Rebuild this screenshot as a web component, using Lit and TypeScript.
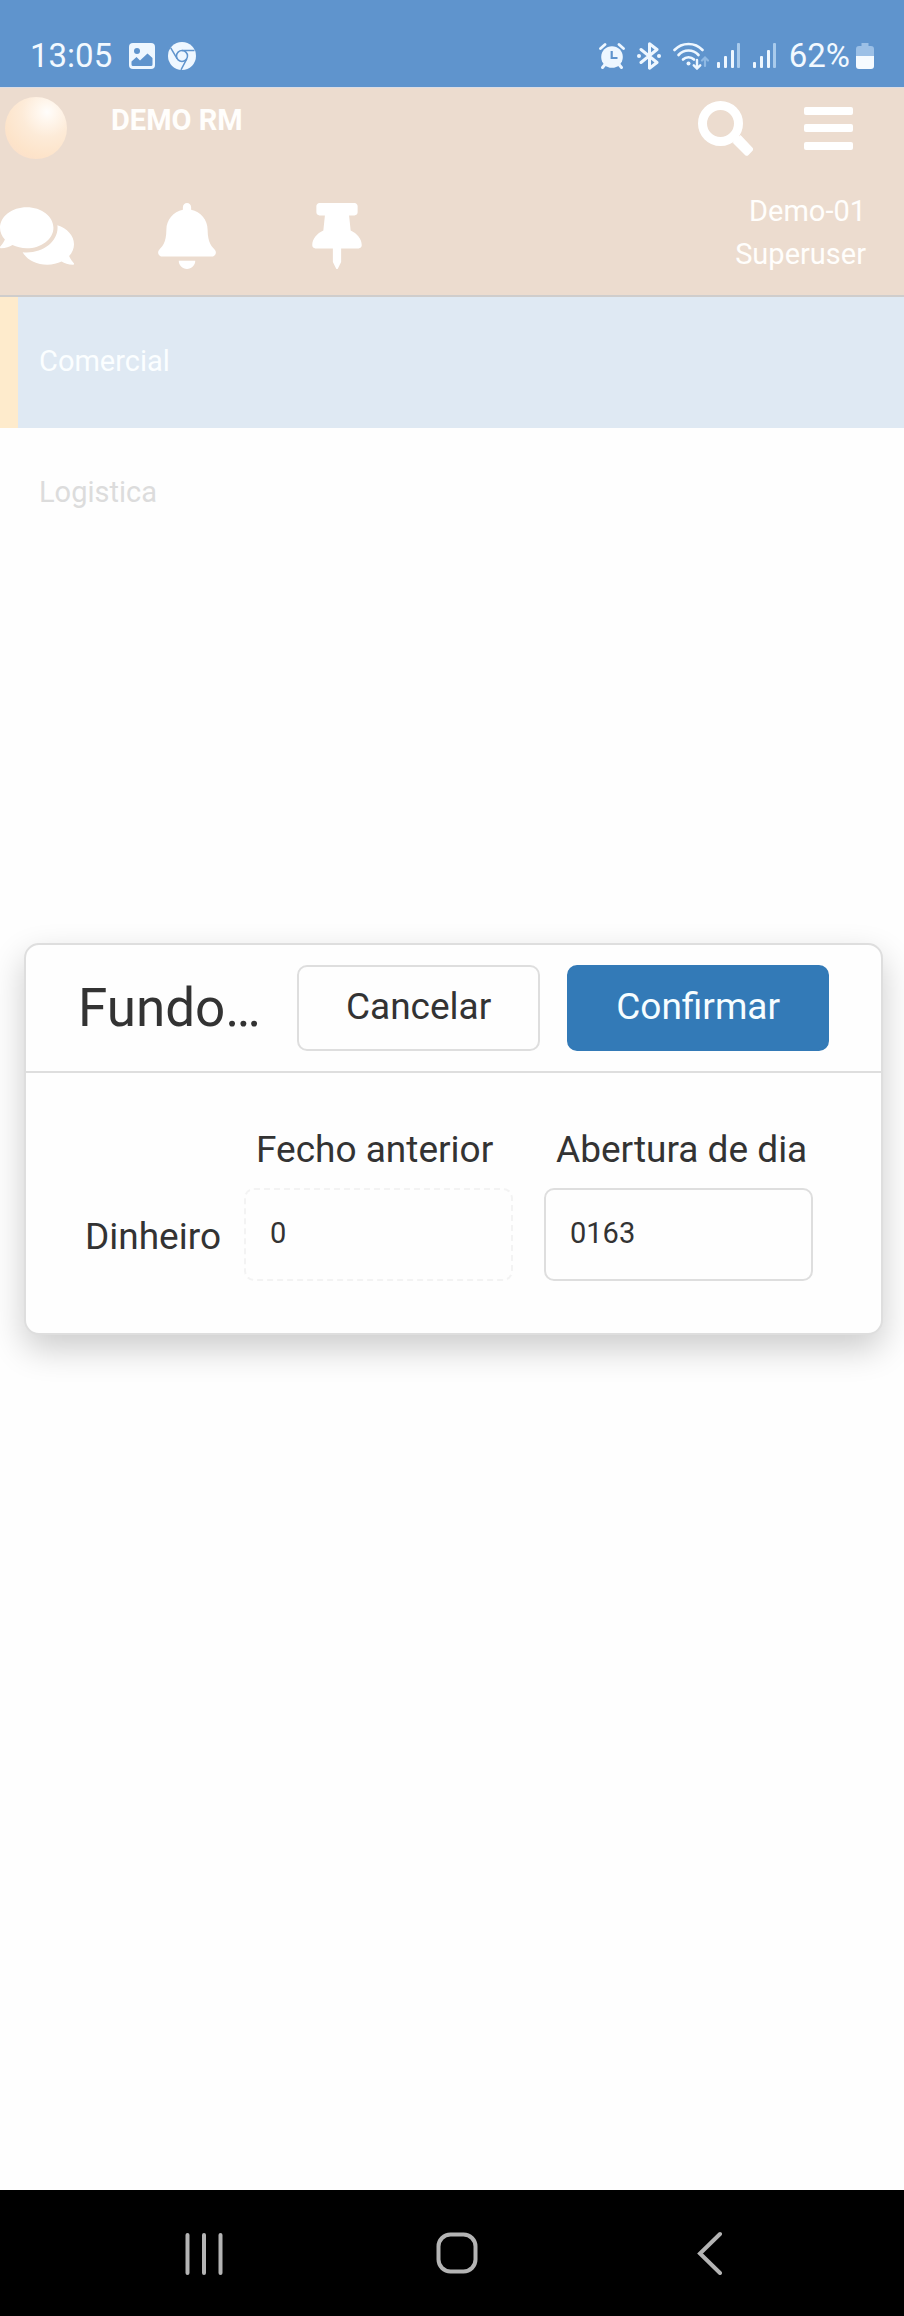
import { LitElement, html, css, svg } from "lit";
import { customElement, property } from "lit/decorators.js";

const signalIcon = html`
  <svg width="24" height="28" viewBox="0 0 24 28" aria-hidden="true">
    <g fill="#eef7ff">
      <rect x="0" y="20" width="3" height="6" rx="1" />
      <rect x="7" y="14" width="3" height="12" rx="1" />
      <rect x="14" y="8" width="3" height="18" rx="1" />
    </g>
    <rect x="20" y="1" width="3" height="25" rx="1" fill="#a9cbec" />
  </svg>
`;

@customElement("status-bar")
export class StatusBar extends LitElement {
  @property() time = "13:05";
  @property() battery = "62%";

  static styles = css`
    :host {
      display: flex;
      justify-content: space-between;
      align-items: center;
      box-sizing: border-box;
      height: 88px;
      padding: 24px 30px 0;
      border-bottom: 1px solid #dcdde4;
      background: #5f94cd;
      color: #f2f9ff;
      font-size: 33px;
      line-height: 40px;
    }
    svg {
      display: block;
      flex: none;
    }
    .group {
      display: flex;
      align-items: center;
      gap: 12px;
    }
    .time {
      margin-right: 4px;
    }
    .wifi {
      margin-right: -4px;
    }
    .level {
      display: flex;
      align-items: center;
      gap: 6px;
    }
  `;

  render() {
    return html`
      <div class="group">
        <span class="time">${this.time}</span>
        <svg width="28" height="28" viewBox="0 0 28 28" aria-hidden="true">
          <rect x="1" y="1" width="26" height="26" rx="4" fill="#eef7ff" />
          <circle cx="9" cy="9" r="3" fill="#5f94cd" />
          <path d="M3.500 22.500V19.500L8.500 15l3.500 3.500 7.500-7 5 4.500v6.500a1.500 1.500 0 0 1-1.500 1.500H5a1.500 1.500 0 0 1-1.500-1.500z" fill="#5f94cd" />
        </svg>
        <svg width="28" height="28" viewBox="0 0 28 28" aria-hidden="true">
          <circle cx="14" cy="14" r="14" fill="#eef7ff" />
          <g fill="none" stroke="#5f94cd" stroke-width="1.500">
            <circle cx="14" cy="14" r="5.500" />
            <path d="M14 8.500H26.500M9.200 16.800L2.700 5.800M18.800 16.800L13 27.800" />
          </g>
        </svg>
      </div>
      <div class="group">
        <svg width="26" height="28" viewBox="0 0 26 28" aria-hidden="true">
          <circle cx="13" cy="15" r="10.800" fill="#eef7ff" />
          <path d="M1.500 6.500L6 2.500M24.500 6.500L20 2.500" stroke="#eef7ff" stroke-width="2.800" stroke-linecap="round" />
          <path d="M6 22.500L3.500 25.500M20 22.500L22.500 25.500" stroke="#eef7ff" stroke-width="3" stroke-linecap="round" />
          <path d="M12.700 9v7h5.800" fill="none" stroke="#5f94cd" stroke-width="2.200" />
        </svg>
        <svg width="24" height="28" viewBox="0 0 24 28" aria-hidden="true">
          <path d="M4 7.500L20 20.500 12.500 26.200V1.800L20 7.500 4 20.500" fill="none" stroke="#eef7ff" stroke-width="3" stroke-linejoin="round" stroke-linecap="round" />
          <circle cx="2" cy="14" r="2" fill="#eef7ff" />
          <circle cx="22" cy="14" r="2" fill="#eef7ff" />
        </svg>
        <svg class="wifi" width="36" height="28" viewBox="0 0 36 28" aria-hidden="true">
          <g fill="none" stroke="#eef7ff" stroke-width="2.600" stroke-linecap="round">
            <path d="M1.500 8C9 0 22 0 29.500 8" />
            <path d="M5.500 13C11 7 20 7 25.500 13" />
            <path d="M10 17.500C13 14.500 18 14.500 21 17.500" />
          </g>
          <circle cx="15.500" cy="21.500" r="2" fill="#eef7ff" />
          <path d="M24 18v8M20.800 23.300L24 26.500 27.200 23.300" fill="none" stroke="#eef7ff" stroke-width="2.400" stroke-linecap="round" />
          <path d="M32 24v-8M29 18.500L32 15.500 35 18.500" fill="none" stroke="#8fb9e4" stroke-width="2.200" stroke-linecap="round" />
        </svg>
        ${signalIcon} ${signalIcon}
        <div class="level">
          <span>${this.battery}</span>
          <svg width="18" height="28" viewBox="0 0 18 28" aria-hidden="true">
            <path d="M5.500 1h7v3H15a3 3 0 0 1 3 3v8H0V7a3 3 0 0 1 3-3h2.500z" fill="#9cc0e6" />
            <path d="M0 14h18v10a3 3 0 0 1-3 3H3a3 3 0 0 1-3-3z" fill="#f6fbff" />
          </svg>
        </div>
      </div>
    `;
  }
}

const glyphs = {
  comments: {
    box: "0 0 576 512",
    width: 74,
    d: "M416 192c0-88.4-93.1-160-208-160S0 103.6 0 192c0 34.3 14.1 65.9 38 92-13.4 30.2-35.5 54.2-35.8 54.5-2.2 2.3-2.8 5.7-1.5 8.7S4.8 352 8 352c36.6 0 66.9-12.3 88.7-25 32.2 15.7 70.3 25 111.3 25 114.900 0 208-71.600 208-160zm122 220c23.900-26 38-57.700 38-92 0-66.900-53.500-124.200-129.300-148.100.9 6.600 1.300 13.300 1.300 20.100 0 105.900-107.700 192-240 192-10.800 0-21.300-.8-31.700-1.900C207.800 439.600 281.800 480 368 480c41 0 79.100-9.200 111.300-25 21.800 12.700 52.100 25 88.700 25 3.200 0 6.100-1.900 7.300-4.800 1.300-2.900.7-6.300-1.500-8.700-.3-.2-22.400-24.200-35.800-54.500z",
  },
  bell: {
    box: "0 0 448 512",
    width: 58,
    d: "M224 512c35.320 0 63.970-28.650 63.970-64H160.030c0 35.350 28.650 64 63.970 64zm215.390-149.710c-19.320-20.760-55.470-51.990-55.470-154.290 0-77.700-54.480-139.900-127.940-155.160V32c0-17.670-14.320-32-31.980-32s-31.980 14.330-31.980 32v20.840C118.560 68.100 64.080 130.300 64.080 208c0 102.300-36.150 133.530-55.470 154.290-6 6.450-8.660 14.160-8.610 21.710.11 16.400 12.980 32 32.100 32h383.800c19.120 0 32-15.600 32.100-32 .05-7.550-2.610-15.270-8.610-21.710z",
  },
  pin: {
    box: "0 0 384 512",
    width: 50,
    d: "M298.028 214.267L285.793 96H328c13.255 0 24-10.745 24-24V24c0-13.255-10.745-24-24-24H56C42.745 0 32 10.745 32 24v48c0 13.255 10.745 24 24 24h42.207L85.972 214.267C37.465 236.820 0 277.261 0 328c0 13.255 10.745 24 24 24h136v104.007c0 1.242.289 2.467.845 3.578l24 48c2.941 5.882 11.364 5.893 14.311 0l24-48a8.008 8.008 0 0 0 .845-3.578V352h136c13.255 0 24-10.745 24-24-.001-51.183-37.983-91.420-85.973-113.733z",
  },
};

@customElement("app-header")
export class AppHeader extends LitElement {
  static styles = css`
    :host {
      display: block;
      padding: 9px 38px 19px 0;
      border-bottom: 2px solid #cfcdcc;
      background: #ecdccf;
      color: #fffefc;
      font-size: 29px;
    }
    svg {
      display: block;
    }
    button {
      display: flex;
      align-items: center;
      justify-content: center;
      padding: 0;
      border: 0;
      background: none;
      color: #ffffff;
    }
    .top,
    .bottom {
      display: flex;
      justify-content: space-between;
      align-items: flex-start;
    }
    .brand {
      display: flex;
      gap: 44px;
      padding-left: 5px;
    }
    .orb {
      width: 62px;
      height: 62px;
      border-radius: 50%;
      background: radial-gradient(circle at 68% 24%, #fffdfb 0, #fff7ee 14%, #fdebd8 40%, #fde4ca 70%, #fadccb 100%);
    }
    .name {
      margin: 0;
      padding-top: 3px;
      font-size: 29px;
      font-weight: 700;
      line-height: 40px;
    }
    .tools {
      display: flex;
      gap: 51px;
      padding: 4px 13px 0 0;
    }
    .bottom {
      padding-top: 31px;
    }
    .shortcuts {
      display: flex;
      gap: 76px;
      padding-top: 13px;
    }
    .shortcuts button {
      width: 74px;
      height: 66px;
    }
    .user {
      line-height: 43px;
      text-align: right;
    }
  `;

  private shortcut(label: string, g: { box: string; width: number; d: string }) {
    return html`
      <button type="button" aria-label=${label}>
        <svg width=${g.width} height="66" viewBox=${g.box}>
          ${svg`<path fill="currentColor" d=${g.d} />`}
        </svg>
      </button>
    `;
  }

  render() {
    return html`
      <div class="top">
        <div class="brand">
          <div class="orb"></div>
          <h1 class="name">DEMO RM</h1>
        </div>
        <div class="tools">
          <button type="button" aria-label="Pesquisar">
            <svg width="55" height="55" viewBox="0 0 55 55">
              <circle cx="22.500" cy="22.500" r="18" fill="none" stroke="currentColor" stroke-width="9" />
              <path d="M34 42.500L42.500 34 54.300 46.500a2.500 2.500 0 0 1 0 3.500L50.500 54a2.500 2.500 0 0 1-3.500 0L35 42z" fill="currentColor" />
              <path d="M31 35.500L35.500 31 42 36 37 42z" fill="currentColor" />
            </svg>
          </button>
          <button type="button" aria-label="Menu">
            <svg width="49" height="55" viewBox="0 0 49 55">
              <g fill="currentColor">
                <rect x="0" y="6" width="49" height="8" rx="2" />
                <rect x="0" y="23" width="49" height="8" rx="2" />
                <rect x="0" y="41" width="49" height="8" rx="2" />
              </g>
            </svg>
          </button>
        </div>
      </div>
      <div class="bottom">
        <div class="shortcuts">
          ${this.shortcut("Mensagens", glyphs.comments)}
          ${this.shortcut("Alertas", glyphs.bell)}
          ${this.shortcut("Fixar", glyphs.pin)}
        </div>
        <div class="user">
          <div>Demo-01</div>
          <div>Superuser</div>
        </div>
      </div>
    `;
  }
}

@customElement("side-menu")
export class SideMenu extends LitElement {
  @property({ attribute: false }) items: string[] = [];
  @property({ type: Number }) selected = 0;

  static styles = css`
    :host {
      display: block;
    }
    ul {
      margin: 0;
      padding: 0;
      list-style: none;
    }
    .item {
      display: block;
      padding: 43px 20px 45px 21px;
      border-left: 18px solid transparent;
      color: #dcdcdc;
      font-size: 29px;
      line-height: 43px;
      text-decoration: none;
    }
    .item.active {
      border-left-color: #feebcc;
      background: #dfe9f3;
      color: #fbfeff;
    }
  `;

  render() {
    return html`
      <nav>
        <ul>
          ${this.items.map(
            (item, i) => html`
              <li><a class="item ${i === this.selected ? "active" : ""}" href="#">${item}</a></li>
            `
          )}
        </ul>
      </nav>
    `;
  }
}

@customElement("cash-dialog")
export class CashDialog extends LitElement {
  static styles = css`
    :host {
      display: block;
      width: 100%;
    }
    .dialog {
      border: 2px solid #dedede;
      border-radius: 15px;
      background: #fefefe;
      color: #333333;
      font-size: 37px;
      line-height: 52px;
      box-shadow: 0 14px 34px rgba(0, 0, 0, 0.2);
    }
    .head {
      display: flex;
      align-items: center;
      padding: 20px 52px;
      border-bottom: 2px solid #dedede;
    }
    .title {
      flex: 1;
      min-width: 0;
      margin: 0;
      font-size: 53px;
      font-weight: 400;
      line-height: 60px;
      white-space: nowrap;
    }
    .actions {
      display: flex;
      gap: 27px;
    }
    button {
      box-sizing: border-box;
      height: 86px;
      padding: 0 47px 3px;
      border: 2px solid #dedede;
      border-radius: 10px;
      background: #fefefe;
      color: inherit;
      font: inherit;
    }
    button.primary {
      border-color: #337ab7;
      background: #337ab7;
      color: #f6fdff;
    }
    .body {
      display: grid;
      grid-template-columns: auto 23px 1fr 31px 1fr;
      align-items: center;
      row-gap: 12px;
      padding: 51px 68px 52px 59px;
    }
    .first {
      grid-column: 3;
    }
    .second {
      grid-column: 5;
    }
    .column {
      padding-left: 12px;
      white-space: nowrap;
    }
    .row {
      padding-top: 4px;
    }
    input {
      box-sizing: border-box;
      width: 100%;
      min-width: 0;
      height: 93px;
      padding: 0 24px 4px;
      border: 2px solid #dedede;
      border-radius: 10px;
      background: #fefefe;
      color: #333333;
      font: inherit;
      font-size: 29px;
      outline: none;
    }
    input[readonly] {
      border: 2px dashed #f3f3f3;
    }
  `;

  render() {
    return html`
      <form class="dialog" role="dialog" aria-labelledby="title">
        <div class="head">
          <h2 class="title" id="title">Fundo…</h2>
          <div class="actions">
            <button type="button">Cancelar</button>
            <button type="button" class="primary">Confirmar</button>
          </div>
        </div>
        <div class="body">
          <label class="column first" for="previous">Fecho anterior</label>
          <label class="column second" for="opening">Abertura de dia</label>
          <span class="row" id="row">Dinheiro</span>
          <input class="first" id="previous" type="text" readonly .value=${"0"} aria-describedby="row" />
          <input class="second" id="opening" type="text" inputmode="numeric" .value=${"0163"} aria-describedby="row" />
        </div>
      </form>
    `;
  }
}

@customElement("system-nav")
export class SystemNav extends LitElement {
  static styles = css`
    :host {
      display: grid;
      grid-template-columns: repeat(3, 253px);
      justify-content: center;
      align-items: center;
      height: 126px;
      padding-left: 10px;
      background: #000000;
    }
    button {
      display: flex;
      justify-content: center;
      padding: 0;
      border: 0;
      background: none;
    }
    svg {
      display: block;
      fill: none;
      stroke: #b4b4b4;
      stroke-width: 4;
      stroke-linecap: round;
    }
  `;

  render() {
    return html`
      <button type="button" aria-label="Recentes">
        <svg width="44" height="44" viewBox="0 0 44 44">
          <path d="M5.500 4V42M22 4V42M38.500 4V42" />
        </svg>
      </button>
      <button type="button" aria-label="Início">
        <svg width="44" height="44" viewBox="0 0 44 44">
          <rect x="3.500" y="3.500" width="37" height="37" rx="12" />
        </svg>
      </button>
      <button type="button" aria-label="Voltar">
        <svg width="44" height="44" viewBox="0 0 44 44">
          <path d="M32 3L12 22.500 32 42" />
        </svg>
      </button>
    `;
  }
}

@customElement("app-root")
export class AppRoot extends LitElement {
  static styles = css`
    :host {
      display: flex;
      flex-direction: column;
      min-height: 100vh;
      background: #fefefe;
      font-family: Roboto, "Liberation Sans", sans-serif;
    }
    .app {
      position: relative;
      flex: 1;
    }
    .overlay {
      position: absolute;
      inset: 0;
      display: flex;
      align-items: center;
      padding: 0 21px 0 24px;
    }
  `;

  render() {
    return html`
      <status-bar></status-bar>
      <main class="app">
        <app-header></app-header>
        <side-menu .items=${["Comercial", "Logistica"]}></side-menu>
        <div class="overlay"><cash-dialog></cash-dialog></div>
      </main>
      <system-nav></system-nav>
    `;
  }
}
